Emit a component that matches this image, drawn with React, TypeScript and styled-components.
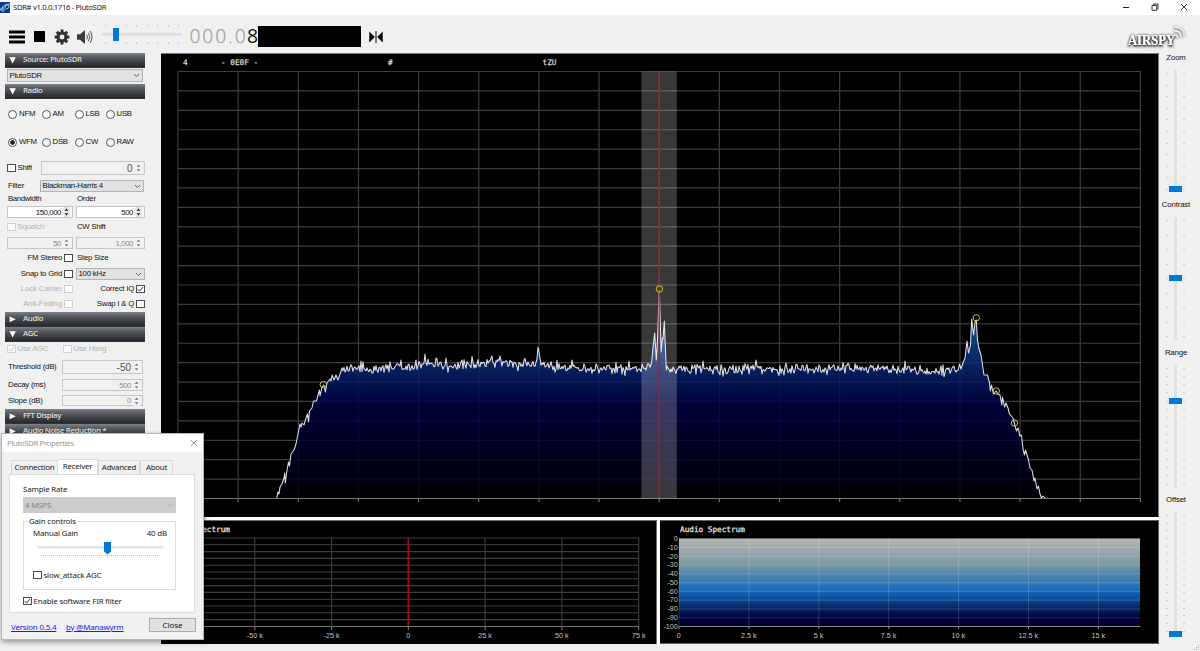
import React from "react";
import styled, { createGlobalStyle, css } from "styled-components";

const Global = createGlobalStyle`
  * { box-sizing: border-box; }
  html, body { margin: 0; padding: 0; overflow: hidden; }
  body { background: #f0f0f0; font-family: "Liberation Sans", Arial, sans-serif; font-size: 8px; color: #111; }
`;

const uiFont = `"Noto Sans", "Open Sans", sans-serif`;

const Window = styled.div`
  position: relative;
  display: flex;
  flex-direction: column;
  width: 1200px;
  height: 651px;
  overflow: hidden;
  background: #f0f0f0;
`;

/* ---------- title bar ---------- */
const TitleBar = styled.header`
  flex: none;
  display: flex;
  align-items: center;
  height: 15px;
  padding-right: 12px;
  background: #fff;
  font: 7.7px/14px ${uiFont};
  color: #222;
`;
const TitleText = styled.span`
  margin: -1px 0 0 3px;
  flex: 1;
  letter-spacing: -0.34px;
`;
const WindowButtons = styled.div`
  display: flex;
  gap: 21px;
  height: 12px;
  margin-top: -2px;
  align-items: center;
`;

/* ---------- toolbar ---------- */
const Toolbar = styled.div`
  flex: none;
  display: flex;
  align-items: center;
  height: 37px;
  padding: 6px 14px 0 9px;
`;
const ToolIcon = styled.svg<{ $gap: number }>`
  flex: none;
  margin-right: ${(p) => p.$gap}px;
`;
const VolumeSlider = styled.div`
  position: relative;
  display: flex;
  flex-direction: column;
  justify-content: space-between;
  width: 80px;
  height: 20px;
  margin: -3px 7px 0 0;
  padding-bottom: 1px;
`;
const TickRow = styled.div`
  display: flex;
  justify-content: space-between;
  padding: 0 3px;
`;
const TickV = styled.i`
  width: 1px;
  height: 2px;
  background: #ccc;
`;
const VolumeTrack = styled.div`
  height: 3px;
  background: #dfe0e0;
`;
const VolumeThumb = styled.div`
  position: absolute;
  left: 11px;
  top: 3px;
  width: 6px;
  height: 13px;
  background: #0078d7;
`;
const Frequency = styled.div`
  display: flex;
  align-items: center;
  width: 68px;
  height: 24px;
  margin-top: -1px;
`;
const IdleDigits = styled.span`
  width: 58px;
  font: 200 19px/24px "DejaVu Sans Light", "DejaVu Sans ExtraLight", "DejaVu Sans", sans-serif;
  letter-spacing: 0.75px;
  color: #a4a4a4;
  -webkit-text-stroke: 0.35px #a4a4a4;
`;
const ActiveDigit = styled.span`
  font: 19.4px/24px "Open Sans", sans-serif;
  color: #111;
`;
const Mask = styled.div`
  width: 103px;
  height: 21px;
  margin: -1px 8px 0 1px;
  background: #000;
`;
const Spacer = styled.div`
  flex: 1;
`;

/* ---------- body ---------- */
const Body = styled.div`
  flex: 1;
  display: flex;
  min-height: 0;
`;
const Sidebar = styled.aside`
  flex: none;
  width: 161px;
  padding: 1px 16px 0 5px;
`;
const SectionHeader = styled.div<{ $mt?: number }>`
  display: flex;
  gap: 7px;
  height: 15px;
  margin-top: ${(p) => p.$mt ?? 0}px;
  padding: 0 0 0 4px;
  background: linear-gradient(#80838a 0%, #606369 20%, #3c3f43 60%, #24272b 96%, #777 100%);
  font: 600 7.9px/12px "Open Sans", sans-serif;
  letter-spacing: -0.42px;
  color: #dcdcdc;
  white-space: nowrap;
  svg { margin-top: 3px; }
`;
const Row = styled.div<{ $mt: number; $h: number }>`
  display: flex;
  align-items: center;
  height: ${(p) => p.$h}px;
  margin-top: ${(p) => p.$mt}px;
  padding-left: 2px;
`;
const Cell = styled.div<{ $w: number; $end?: boolean; $pad?: number; $off?: boolean; $fill?: boolean }>`
  flex: none;
  display: flex;
  align-items: center;
  gap: 2px;
  width: ${(p) => p.$w}px;
  height: ${(p) => (p.$fill ? "100%" : "auto")};
  padding-left: ${(p) => p.$pad ?? 0}px;
  justify-content: ${(p) => (p.$end ? "flex-end" : "flex-start")};
  color: ${(p) => (p.$off ? "#b4b4b4" : "#111")};
  white-space: nowrap;
`;
const Text = styled.span<{ $ls?: number }>`
  font-size: 7.8px;
  line-height: 10px;
  letter-spacing: ${(p) => p.$ls ?? -0.22}px;
  white-space: nowrap;
`;
const Field = styled.div<{ $w: number; $off?: boolean; $big?: boolean }>`
  flex: none;
  display: flex;
  align-items: center;
  justify-content: flex-end;
  gap: 2px;
  width: ${(p) => p.$w}px;
  height: 100%;
  padding-right: 2px;
  border: 1px solid #c6c6c6;
  background: ${(p) => (p.$off ? "#f0f0f0" : "#fff")};
  color: ${(p) => (p.$off ? "#8c8c8c" : "#111")};
  font-size: ${(p) => (p.$big ? 10 : 7.8)}px;
  letter-spacing: ${(p) => (p.$big ? 0 : -0.42)}px;
  ${(p) => p.$big && css`color: #555;`}
`;
const SelectBox = styled.div<{ $w: number }>`
  flex: none;
  display: flex;
  align-items: center;
  justify-content: space-between;
  width: ${(p) => p.$w}px;
  height: 100%;
  padding: 0 2px 0 1.5px;
  border: 1px solid #b4b4b4;
  background: #e2e2e2;
`;
const Box = styled.span<{ $off?: boolean }>`
  flex: none;
  display: flex;
  width: 8.5px;
  height: 8.5px;
  border: 1px solid ${(p) => (p.$off ? "#cfcfcf" : "#4a4a4a")};
  background: #fff;
`;
const RadioDot = styled.span<{ $on?: boolean }>`
  flex: none;
  width: 9px;
  height: 9px;
  margin-left: -0.5px;
  border: 1px solid #555;
  border-radius: 50%;
  background: ${(p) => (p.$on ? "radial-gradient(circle, #222 0 2px, #fff 2.6px)" : "#fff")};
`;
const RadioGrid = styled.div<{ $mt: number }>`
  display: grid;
  grid-template-columns: 33.5px 33px 31px auto;
  height: 14px;
  align-items: center;
  margin-top: ${(p) => p.$mt}px;
  padding-left: 3.5px;
`;

const Check = ({ on, off }: { on?: boolean; off?: boolean }) => (
  <Box $off={off}>
    {on && (
      <svg width="6.5" height="6.5" viewBox="0 0 7 7">
        <path d="M0.8 3.4 L2.8 5.5 L6.4 1.2" fill="none" stroke={off ? "#b4b4b4" : "#222"} strokeWidth="1" />
      </svg>
    )}
  </Box>
);
const Chevron = ({ color = "#555" }: { color?: string }) => (
  <svg width="7" height="5" viewBox="0 0 7 5">
    <path d="M1 1 L3.5 3.6 L6 1" fill="none" stroke={color} strokeWidth="0.9" />
  </svg>
);
const Spin = ({ off }: { off?: boolean }) => (
  <svg width="7" height="10" viewBox="0 0 7 10">
    <rect x="0.3" y="0" width="6.4" height="10" fill={off ? "#f3f3f3" : "#e6e6e6"} />
    <path d="M1.6 3.8 L3.5 1.6 L5.4 3.8 Z M1.6 6.2 L3.5 8.4 L5.4 6.2 Z" fill={off ? "#777" : "#222"} />
  </svg>
);
const Num = ({ w, v, off, big }: { w: number; v: string; off?: boolean; big?: boolean }) => (
  <Field $w={w} $off={off} $big={big}>
    {v}
    <Spin off={off} />
  </Field>
);
const Header = ({ title, open, mt }: { title: string; open?: boolean; mt?: number }) => (
  <SectionHeader $mt={mt}>
    <svg width="7" height="9" viewBox="0 0 7 9">
      <path d={open ? "M0.4 1.2 H6.8 L3.6 7.4 Z" : "M0.6 1.4 V7.2 L6.8 4.3 Z"} fill="#fff" />
    </svg>
    {title}
  </SectionHeader>
);
const Radio = ({ label, on }: { label: string; on?: boolean }) => (
  <Cell $w={31}>
    <RadioDot $on={on} />
    <Text $ls={-0.25}>{label}</Text>
  </Cell>
);

/* ---------- charts ---------- */
const Charts = styled.main`
  flex: none;
  display: flex;
  flex-direction: column;
  width: 998px;
  padding-top: 1px;
`;
const Split = styled.div`
  display: flex;
  gap: 3px;
  margin-top: 3px;
  background: #fff;
  box-shadow: 0 -3px 0 #fff;
`;
const Plot = styled.svg`
  display: block;
  flex: none;
  background: #000;
`;

const seeded = (seed: number) => () => {
  seed = (seed + 0x6d2b79f5) | 0;
  let t = Math.imul(seed ^ (seed >>> 15), 1 | seed);
  t = (t + Math.imul(t ^ (t >>> 7), 61 | t)) ^ t;
  return ((t ^ (t >>> 14)) >>> 0) / 4294967296;
};

const rise: [number, number][] = [
  [276.7, 498], [278, 492], [279, 494], [280, 487], [282, 484], [284, 478], [284.7, 473], [285.3, 483], [287, 470],
  [288.5, 462], [289.5, 466], [291, 454], [294, 450], [296, 444], [298, 434], [300, 424], [301, 427], [302, 423],
  [304, 425], [306, 418], [307.5, 414], [308.5, 422], [309.5, 411], [312, 408], [313.5, 401], [316.5, 401],
  [318, 395], [319.5, 390], [320, 396], [322, 387], [324, 385], [325.4, 392], [327, 383], [330, 379], [331, 381],
  [332, 375], [334, 380], [336, 375], [338, 380], [340, 374], [342, 368],
];
const centre: [number, number][] = [
  [651.5, 363], [653, 348], [654.7, 333], [656.3, 360], [657.5, 340], [659.3, 290], [661.2, 352], [662.3, 338],
  [663, 339], [664.3, 321], [666.3, 370], [667, 366],
];
const fall: [number, number][] = [
  [959.5, 364], [961, 369], [963, 363], [965, 358], [967, 341], [968.6, 353], [970.5, 345], [971.7, 319], [973.6, 335],
  [975, 322], [976.3, 320], [977.5, 340], [979, 349], [981, 355], [984, 375], [987.5, 375], [989.5, 383], [990.3, 391],
  [991.5, 385], [993.5, 394], [996, 391], [998, 394], [1000, 395], [1001.8, 405], [1002.5, 397], [1004.5, 407],
  [1006, 403], [1008, 408], [1009.5, 414], [1013, 418], [1015, 426], [1016.5, 431], [1018, 428], [1020, 436],
  [1021.5, 435], [1023, 449], [1024.5, 455], [1025.5, 450], [1027, 455], [1028.5, 460], [1030, 468], [1032, 470],
  [1034, 481], [1035, 478], [1037, 489], [1038.5, 486], [1040, 494], [1041.5, 498], [1043, 496], [1045, 498],
];
const floorLevels: [number, number][] = [
  [342, 369], [380, 370], [400, 367], [410, 366], [430, 364], [470, 365], [500, 362], [540, 364], [560, 367],
  [590, 369], [651, 368], [666, 368], [700, 369], [750, 369], [800, 370], [870, 368], [920, 371], [960, 370],
];
const spikes: Record<number, number> = {
  361: 361, 401: 360, 425: 354, 436: 358, 446: 358, 492: 356, 500: 356, 537: 359, 538: 347, 539: 352, 540: 358,
  572: 360, 629: 361, 703: 361, 756: 360, 905: 361,
};
const level = (x: number) => {
  for (let i = 1; i < floorLevels.length; i++) {
    const [x1, y1] = floorLevels[i];
    const [x0, y0] = floorLevels[i - 1];
    if (x <= x1) return y0 + ((y1 - y0) * (x - x0)) / (x1 - x0);
  }
  return 370;
};
const rnd = seeded(42);
const noise = (a: number, b: number) => {
  const out: [number, number][] = [];
  for (let x = a; x < b; x += 1) {
    const burst = rnd() > 0.9 ? 1.7 : 1;
    const y = spikes[x] ?? level(x) + (rnd() + rnd() - 1) * 6 * burst;
    out.push([x, y]);
  }
  return out;
};
const trace = [...rise, ...noise(343, 651), ...centre, ...noise(668, 959), ...fall];
const line = "M" + trace.map(([x, y]) => `${x} ${y.toFixed(1)}`).join("L");
const peaks: [number, number][] = [[323.3, 384.6], [659.4, 289], [976.3, 317.8], [996.3, 391], [1014.5, 423]];
const range = (n: number) => Array.from({ length: n }, (_, i) => i);
const mono = `"DejaVu Sans Mono", monospace`;

const MainSpectrum = () => (
  <Plot width="998" height="464" viewBox="161 53 998 464">
    <defs>
      <linearGradient id="sky" gradientUnits="userSpaceOnUse" x1="0" x2="0" y1="71" y2="498">
        <stop offset="0.45" stopColor="#3f7cb4" />
        <stop offset="0.58" stopColor="#1560ad" />
        <stop offset="0.68" stopColor="#092d78" />
        <stop offset="0.78" stopColor="#000044" />
        <stop offset="1" stopColor="#000008" />
      </linearGradient>
    </defs>
    <path d="M161 53.5H1158.5V516.5" fill="none" stroke="#999" strokeWidth="0.8" />
    <g stroke="#3d3d3d" strokeWidth="1.2">
      {range(22).map((i) => (
        <line key={i} x1="178" x2="1140.5" y1={71.5 + i * 19.41} y2={71.5 + i * 19.41} />
      ))}
      {range(17).map((i) => (
        <line key={i} x1={178 + i * 60.15} x2={178 + i * 60.15} y1="71.5" y2="498" />
      ))}
    </g>
    <path d={`${line}L276.7 498Z`} fill="url(#sky)" fillOpacity="0.84" />
    <g stroke="#777" strokeWidth="1.1">
      <line x1="178" x2="1140.5" y1="498.5" y2="498.5" />
      {range(17).map((i) => (
        <line key={i} x1={178 + i * 60.15} x2={178 + i * 60.15} y1="498" y2="502" />
      ))}
    </g>
    <path d={line} fill="none" stroke="#e0e0e6" strokeWidth="1.05" strokeLinejoin="round" />
    <rect x="641.3" y="71.5" width="35.5" height="427" fill="#fff" fillOpacity="0.22" />
    <line x1="659.2" x2="659.2" y1="71.5" y2="498" stroke="#b81420" strokeOpacity="0.9" strokeWidth="1.4" />
    <g fill="none" stroke="#c8c814" strokeWidth="1">
      {peaks.map(([x, y]) => (
        <circle key={x} cx={x} cy={y} r="3.2" />
      ))}
    </g>
    <g fill="#d8d8d8" fontFamily={mono} fontSize="7.7" stroke="#d8d8d8" strokeWidth="0.25">
      <text x="183" y="65">4</text>
      <text x="221" y="65">- 0E0F -</text>
      <text x="388" y="65">#</text>
      <text x="542.5" y="65">tZU</text>
    </g>
  </Plot>
);

const IfSpectrum = () => (
  <Plot width="496" height="124" viewBox="161 520 496 124">
    <path d="M161 520.5H656.5V644" fill="none" stroke="#888" strokeWidth="0.8" />
    <text x="179" y="531.5" fill="#e4e4e4" fontFamily={mono} fontSize="7.7" stroke="#e4e4e4" strokeWidth="0.25">IF Spectrum</text>
    <g stroke="#404040" strokeWidth="1.1">
      {range(13).map((i) => (
        <line key={i} x1="178" x2="638.6" y1={538 + i * 6.8} y2={538 + i * 6.8} />
      ))}
      {range(7).map((i) => (
        <line key={i} x1={178 + i * 76.78} x2={178 + i * 76.78} y1="538" y2="626" />
      ))}
    </g>
    <g stroke="#777" strokeWidth="1.1">
      <line x1="178" x2="638.6" y1="626.5" y2="626.5" />
      {range(7).map((i) => (
        <line key={i} x1={178 + i * 76.78} x2={178 + i * 76.78} y1="626" y2="630" />
      ))}
    </g>
    <line x1="408.2" x2="408.2" y1="538" y2="626" stroke="#c00010" strokeWidth="1.2" />
    <g fill="#c4c4c4" fontFamily="Liberation Sans" fontSize="7.2" textAnchor="middle">
      {["-50 k", "-25 k", "0", "25 k", "50 k", "75 k"].map((t, i) => (
        <text key={t} x={254.8 + i * 76.78} y="638">{t}</text>
      ))}
    </g>
  </Plot>
);

const AudioSpectrum = () => (
  <Plot width="499" height="124" viewBox="660 520 499 124">
    <defs>
      <linearGradient id="audio" x1="0" x2="0" y1="0" y2="1">
        <stop offset="0" stopColor="#b4b4b4" />
        <stop offset="0.28" stopColor="#7f9ba1" />
        <stop offset="0.6" stopColor="#1068bc" />
        <stop offset="0.78" stopColor="#08296a" />
        <stop offset="0.9" stopColor="#00003e" />
        <stop offset="1" stopColor="#000028" />
      </linearGradient>
    </defs>
    <path d="M660 520.5H1158.5V643.5H660" fill="none" stroke="#777" strokeWidth="0.8" />
    <text x="680" y="531.5" fill="#e4e4e4" fontFamily={mono} fontSize="7.7" stroke="#e4e4e4" strokeWidth="0.25">Audio Spectrum</text>
    <rect x="679" y="538.5" width="461" height="88" fill="url(#audio)" />
    <g stroke="#fff" strokeOpacity="0.15" strokeWidth="1.1">
      {range(10).map((i) => (
        <line key={i} x1="679" x2="1140.5" y1={538.7 + i * 8.78} y2={538.7 + i * 8.78} />
      ))}
      {range(7).map((i) => (
        <line key={i} x1={679 + i * 69.9} x2={679 + i * 69.9} y1="538.5" y2="626" />
      ))}
    </g>
    <g stroke="#888" strokeWidth="1">
      <line x1="679" x2="1140.5" y1="626.5" y2="626.5" />
      {range(7).map((i) => (
        <line key={i} x1={679 + i * 69.9} x2={679 + i * 69.9} y1="626" y2="629" />
      ))}
    </g>
    <g fill="#c4c4c4" fontFamily="Liberation Sans" fontSize="7.2">
      <g textAnchor="end">
        {range(11).map((i) => (
          <text key={i} x="677.8" y={541 + i * 8.78}>{i ? `-${i * 10}` : "0"}</text>
        ))}
      </g>
      <g textAnchor="middle">
        {["0", "2.5 k", "5 k", "7.5 k", "10 k", "12.5 k", "15 k"].map((t, i) => (
          <text key={t} x={678.8 + i * 69.9} y="638">{t}</text>
        ))}
      </g>
    </g>
  </Plot>
);

/* ---------- right sliders ---------- */
const RightPanel = styled.aside`
  flex: 1;
  display: flex;
  flex-direction: column;
`;
const SliderGroup = styled.div`
  flex: none;
  display: flex;
  flex-direction: column;
  align-items: center;
  height: 147.3px;
  padding: 0 8px 0 0;
`;
const SliderLabel = styled.div`
  height: 18px;
  padding-left: 1px;
  font-size: 7.8px;
  line-height: 11px;
  letter-spacing: -0.15px;
`;
const SliderBody = styled.div`
  position: relative;
  display: flex;
  justify-content: space-between;
  width: 19px;
  height: 123px;
`;
const TickColumn = styled.div`
  display: flex;
  flex-direction: column;
  justify-content: space-between;
  padding: 3px 0;
`;
const TickH = styled.i`
  width: 2px;
  height: 1px;
  background: #cacaca;
`;
const Track = styled.div`
  width: 3px;
  background: #dfe0e0;
`;
const Thumb = styled.div<{ $y: number }>`
  position: absolute;
  left: 2.5px;
  top: ${(p) => p.$y}px;
  width: 13px;
  height: 6px;
  background: #0078d7;
`;
const Slider = ({ label, ticks, y }: { label: string; ticks: number; y: number }) => (
  <SliderGroup>
    <SliderLabel>{label}</SliderLabel>
    <SliderBody>
      <TickColumn>{range(ticks).map((i) => <TickH key={i} />)}</TickColumn>
      <Track />
      <TickColumn>{range(ticks).map((i) => <TickH key={i} />)}</TickColumn>
      <Thumb $y={y} />
    </SliderBody>
  </SliderGroup>
);
const Grip = styled.svg`
  position: absolute;
  right: 0;
  bottom: 0;
`;
const Logo = styled.svg`
  overflow: visible;
`;

/* ---------- properties dialog ---------- */
const Dialog = styled.section`
  position: absolute;
  left: 1px;
  top: 433px;
  width: 203px;
  height: 207px;
  border: 1px solid #b5b5b5;
  background: #f0f0f0;
  box-shadow: 1px 2px 5px rgba(0, 0, 0, 0.4);
  font: 7.9px/10px ${uiFont};
  letter-spacing: -0.17px;
  color: #222;
`;
const DialogTitle = styled.div`
  display: flex;
  align-items: center;
  justify-content: space-between;
  height: 18px;
  padding: 0 5px;
  background: #fff;
  color: #9a9a9a;
  letter-spacing: -0.42px;
`;
const Tabs = styled.div`
  display: flex;
  align-items: flex-end;
  height: 22px;
  padding-left: 9px;
`;
const Tab = styled.div<{ $w: number; $on?: boolean }>`
  width: ${(p) => p.$w}px;
  height: ${(p) => (p.$on ? 15 : 14)}px;
  border: 1px solid #d9d9d9;
  border-bottom: 0;
  border-left-width: ${(p) => (p.$on ? 0 : 1)}px;
  background: ${(p) => (p.$on ? "#fff" : "#f0f0f0")};
  line-height: ${(p) => (p.$on ? 13 : 13)}px;
  letter-spacing: -0.25px;
  text-align: center;
  white-space: nowrap;
`;
const TabPage = styled.div`
  display: flex;
  flex-direction: column;
  width: 186px;
  height: 139px;
  margin-left: 7px;
  padding: 9px 18px 0 13px;
  border: 1px solid #dcdcdc;
  background: #fff;
`;
const RateSelect = styled.div`
  display: flex;
  align-items: center;
  justify-content: space-between;
  height: 16px;
  margin-top: 3px;
  padding: 0 2px;
  background: #ccc;
  color: #838383;
`;
const Group = styled.div`
  display: flex;
  flex-direction: column;
  height: 69px;
  margin-top: 8px;
  padding: 0 8px 0 9px;
  border: 1px solid #dcdcdc;
`;
const Legend = styled.span`
  align-self: flex-start;
  margin: -6px 0 0 -6px;
  padding: 0 2px;
  background: #fff;
`;
const Pair = styled.div`
  display: flex;
  justify-content: space-between;
  height: 12px;
  padding-top: 2px;
`;
const CheckLine = styled.label<{ $mt: number }>`
  display: flex;
  align-items: center;
  gap: 2px;
  margin-top: ${(p) => p.$mt}px;
  white-space: nowrap;
`;
const GainSlider = styled.svg`
  display: block;
  margin: 4px 0 0 4px;
`;
const Footer = styled.div`
  display: flex;
  align-items: center;
  height: 25px;
  padding: 0 7px 0 9px;
`;
const Link = styled.a<{ $w: number }>`
  width: ${(p) => p.$w}px;
  padding-top: 2px;
  color: #1a1aff;
  text-decoration: underline;
  white-space: nowrap;
`;
const CloseButton = styled.button`
  width: 47px;
  height: 14px;
  margin: -1px 0 0 auto;
  padding: 0;
  border: 1px solid #adadad;
  background: #e1e1e1;
  font: inherit;
  line-height: 11px;
  color: #111;
`;

const gear = range(8).map((i) => {
  const a = (i * Math.PI) / 4;
  return `M8 8L${(8 + 7.4 * Math.cos(a)).toFixed(2)} ${(8 + 7.4 * Math.sin(a)).toFixed(2)}`;
}).join("");

export default function App() {
  return (
    <Window>
      <Global />
      <TitleBar>
        <svg width="10" height="12" viewBox="0 0 10 12">
          <rect width="10" height="11" y="0" fill="#0c3c8c" />
          <path d="M0 8.5C2 4 4 5 4 7.5S1.5 10 2 7 7 1.5 8.5 3.5 7 8 5.5 6 7 2 10 2" fill="none" stroke="#b8dcff" strokeWidth="1" />
        </svg>
        <TitleText>SDR# v1.0.0.1716 - PlutoSDR</TitleText>
        <WindowButtons>
          <svg width="8" height="8" viewBox="0 0 8 8"><path d="M1 4.5H7" stroke="#222" /></svg>
          <svg width="8" height="8" viewBox="0 0 8 8">
            <path d="M1 2.5H5.7V7.3H1ZM2.4 2.4V1H7V5.8H5.8" fill="none" stroke="#222" strokeWidth="0.9" />
          </svg>
          <svg width="8" height="8" viewBox="0 0 8 8"><path d="M1 1L7 7M7 1L1 7" stroke="#222" strokeWidth="0.9" /></svg>
        </WindowButtons>
      </TitleBar>

      <Toolbar>
        <ToolIcon $gap={9} width="16" height="14" viewBox="0 0 16 14">
          <path d="M0 2H16M0 7H16M0 12H16" stroke="#000" strokeWidth="2.8" />
        </ToolIcon>
        <ToolIcon $gap={9} width="11" height="11" viewBox="0 0 11 11"><rect width="11" height="11" fill="#000" /></ToolIcon>
        <ToolIcon $gap={7} width="16" height="16" viewBox="0 0 16 16">
          <path d={gear} stroke="#333" strokeWidth="3" />
          <circle cx="8" cy="8" r="4" fill="none" stroke="#333" strokeWidth="3.2" />
          <circle cx="8" cy="8" r="2.4" fill="#f0f0f0" />
        </ToolIcon>
        <ToolIcon $gap={9} width="16" height="16" viewBox="0 0 16 16">
          <path d="M0 5.2H3L8 1V15L3 10.8H0Z" fill="#3a3a3a" />
          <path d="M9.7 5.6Q11.3 8 9.7 10.4M11.4 3.8Q14.2 8 11.4 12.2M13.2 2Q16.8 8 13.2 14" fill="none" stroke="#555" strokeWidth="1" />
        </ToolIcon>
        <VolumeSlider>
          <TickRow>{range(8).map((i) => <TickV key={i} />)}</TickRow>
          <VolumeTrack />
          <TickRow>{range(8).map((i) => <TickV key={i} />)}</TickRow>
          <VolumeThumb />
        </VolumeSlider>
        <Frequency><IdleDigits>000.0</IdleDigits><ActiveDigit>8</ActiveDigit></Frequency>
        <Mask />
        <svg width="14" height="12" viewBox="0 0 14 12">
          <path d="M0.3 0.5L5.8 6L0.3 11.5ZM13.7 0.5L8.2 6L13.7 11.5Z" fill="#000" />
          <path d="M7 0V12" stroke="#000" strokeWidth="1" />
        </svg>
        <Spacer />
        <Logo width="60" height="24" viewBox="1126 25 60 24">
          <defs>
            <filter id="glow" x="-20%" y="-40%" width="140%" height="180%">
              <feDropShadow dx="0" dy="0.6" stdDeviation="1" floodColor="#222" floodOpacity="1" />
            </filter>
          </defs>
          <g filter="url(#glow)">
            <g filter="url(#glow)">
              <text x="1128" y="44.5" fill="#fff" fontFamily="Liberation Serif" fontWeight="bold" fontSize="14.5" textLength="47" lengthAdjust="spacingAndGlyphs">AIRSPY</text>
            </g>
            <path d="M1174 34.7Q1177.5 34.7 1177.5 37.7M1174 30.9Q1181 30.9 1181 36.7M1174 27.2Q1184.2 27.2 1184.2 35.7" fill="none" stroke="#f4f4f4" strokeWidth="1.2" />
          </g>
        </Logo>
      </Toolbar>

      <Body>
        <Sidebar>
          <Header title="Source: PlutoSDR" open />
          <Row $mt={1} $h={13}><SelectBox $w={136}><Text>PlutoSDR</Text><Chevron /></SelectBox></Row>
          <Header title="Radio" open mt={2} />
          <RadioGrid $mt={8}>
            <Radio label="NFM" /><Radio label="AM" /><Radio label="LSB" /><Radio label="USB" />
          </RadioGrid>
          <RadioGrid $mt={14}>
            <Radio label="WFM" on /><Radio label="DSB" /><Radio label="CW" /><Radio label="RAW" />
          </RadioGrid>
          <Row $mt={12} $h={14}>
            <Cell $w={33.5}><Check /><Text>Shift</Text></Cell>
            <Num w={104} v="0" off big />
          </Row>
          <Row $mt={5} $h={12}>
            <Cell $w={33} $pad={1}><Text>Filter</Text></Cell>
            <SelectBox $w={104}><Text>Blackman-Harris 4</Text><Chevron /></SelectBox>
          </Row>
          <Row $mt={2} $h={10}>
            <Cell $w={70} $pad={1}><Text $ls={-0.35}>Bandwidth</Text></Cell>
            <Cell $w={60}><Text>Order</Text></Cell>
          </Row>
          <Row $mt={2} $h={12}>
            <Cell $w={69} $fill><Num w={66} v="150,000" /></Cell>
            <Num w={69} v="500" />
          </Row>
          <Row $mt={4} $h={10}>
            <Cell $w={70} $off><Check off /><Text>Squelch</Text></Cell>
            <Cell $w={60}><Text $ls={-0.3}>CW Shift</Text></Cell>
          </Row>
          <Row $mt={5} $h={12}>
            <Cell $w={69} $fill><Num w={66} v="50" off /></Cell>
            <Num w={69} v="1,000" off />
          </Row>
          <Row $mt={4} $h={10}>
            <Cell $w={65.5} $end><Text>FM Stereo</Text><Check /></Cell>
            <Cell $w={60} $pad={4.5}><Text>Step Size</Text></Cell>
          </Row>
          <Row $mt={5} $h={12}>
            <Cell $w={65.5} $end><Text>Snap to Grid</Text><Check /></Cell>
            <Cell $w={72} $pad={3.5} $fill><SelectBox $w={69}><Text>100 kHz</Text><Chevron /></SelectBox></Cell>
          </Row>
          <Row $mt={4} $h={10}>
            <Cell $w={65.5} $end $off><Text $ls={-0.1}>Lock Carrier</Text><Check off /></Cell>
            <Cell $w={72} $end><Text>Correct IQ</Text><Check on /></Cell>
          </Row>
          <Row $mt={5} $h={10}>
            <Cell $w={65.5} $end $off><Text $ls={-0.1}>Anti-Fading</Text><Check off /></Cell>
            <Cell $w={72} $end><Text>Swap I &amp; Q</Text><Check /></Cell>
          </Row>
          <Header title="Audio" mt={3} />
          <Header title="AGC" open />
          <Row $mt={2} $h={10}>
            <Cell $w={56} $off><Check on off /><Text>Use AGC</Text></Cell>
            <Cell $w={60} $off><Check off /><Text>Use Hang</Text></Cell>
          </Row>
          <Row $mt={6} $h={14}>
            <Cell $w={55} $pad={1}><Text>Threshold (dB)</Text></Cell>
            <Num w={81} v="-50" off big />
          </Row>
          <Row $mt={5} $h={12}>
            <Cell $w={55} $pad={1}><Text>Decay (ms)</Text></Cell>
            <Num w={81} v="500" off />
          </Row>
          <Row $mt={4} $h={11}>
            <Cell $w={55} $pad={1}><Text>Slope (dB)</Text></Cell>
            <Num w={81} v="0" off />
          </Row>
          <Header title="FFT Display" mt={3} />
          <Header title="Audio Noise Reduction *" />
        </Sidebar>

        <Charts>
          <MainSpectrum />
          <Split>
            <IfSpectrum />
            <AudioSpectrum />
          </Split>
        </Charts>

        <RightPanel>
          <Slider label="Zoom" ticks={11} y={116} />
          <Slider label="Contrast" ticks={9} y={58} />
          <Slider label="Range" ticks={15} y={33} />
          <Slider label="Offset" ticks={16} y={119} />
        </RightPanel>
      </Body>

      <Dialog>
        <DialogTitle>
          PlutoSDR Properties
          <svg width="8" height="8" viewBox="0 0 8 8"><path d="M1 1L7 7M7 1L1 7" stroke="#888" strokeWidth="0.8" /></svg>
        </DialogTitle>
        <Tabs>
          <Tab $w={47}>Connection</Tab>
          <Tab $w={40} $on>Receiver</Tab>
          <Tab $w={42}>Advanced</Tab>
          <Tab $w={33}>About</Tab>
        </Tabs>
        <TabPage>
          <span>Sample Rate</span>
          <RateSelect>4 MSPS<Chevron color="#aaa" /></RateSelect>
          <Group>
            <Legend>Gain controls</Legend>
            <Pair><span>Manual Gain</span><span>40 dB</span></Pair>
            <GainSlider width="128" height="17" viewBox="0 0 128 17">
              <rect x="0.5" y="4" width="126" height="2.4" fill="#e2e2e2" />
              <path d="M4 13.5H124" stroke="#c4c4c4" strokeDasharray="1 1" />
              <path d="M67 0H74V9.5L70.5 12.5L67 9.5Z" fill="#0078d7" />
            </GainSlider>
            <CheckLine $mt={11}><Check />slow_attack AGC</CheckLine>
          </Group>
          <CheckLine $mt={6}><Check on />Enable software FIR filter</CheckLine>
        </TabPage>
        <Footer>
          <Link $w={55}>Version 0.5.4</Link>
          <Link $w={60}>by @Manawyrm</Link>
          <CloseButton>Close</CloseButton>
        </Footer>
      </Dialog>
      <Grip width="7" height="7" viewBox="0 0 7 7">
        <path d="M5 1h1v1h-1zM3 3h1v1h-1zM5 3h1v1h-1zM1 5h1v1h-1zM3 5h1v1h-1zM5 5h1v1h-1z" fill="#aaa" />
      </Grip>
    </Window>
  );
}
